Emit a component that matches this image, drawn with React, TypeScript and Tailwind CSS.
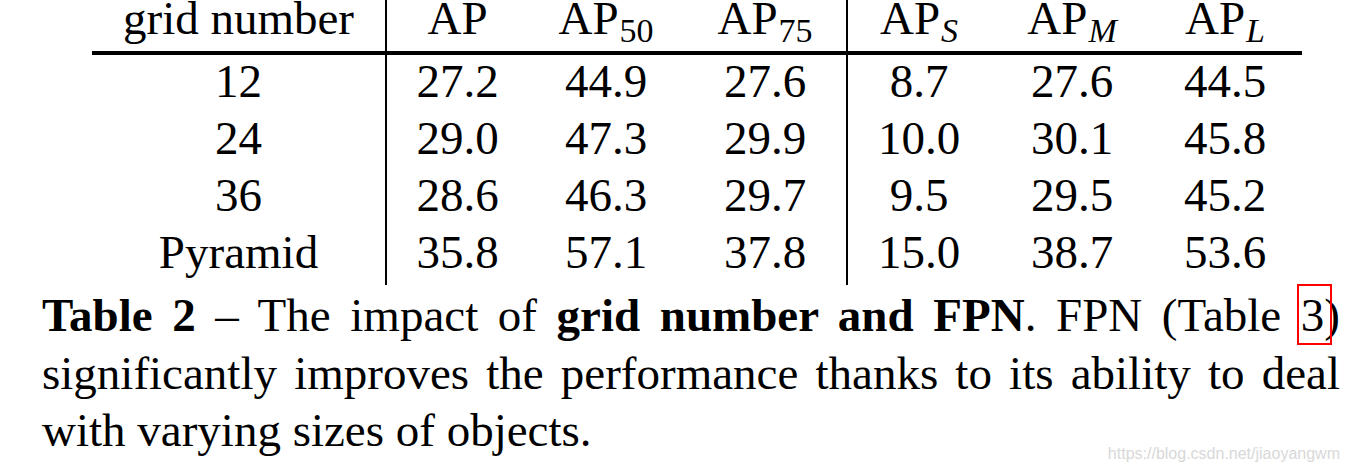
type Head = { base: string; sub?: string; italic?: boolean };

const heads: Head[] = [
  { base: "grid number" },
  { base: "AP" },
  { base: "AP", sub: "50" },
  { base: "AP", sub: "75" },
  { base: "AP", sub: "S", italic: true },
  { base: "AP", sub: "M", italic: true },
  { base: "AP", sub: "L", italic: true },
];

const rows = [
  ["12", "27.2", "44.9", "27.6", "8.7", "27.6", "44.5"],
  ["24", "29.0", "47.3", "29.9", "10.0", "30.1", "45.8"],
  ["36", "28.6", "46.3", "29.7", "9.5", "29.5", "45.2"],
  ["Pyramid", "35.8", "57.1", "37.8", "15.0", "38.7", "53.6"],
];

// vertical rules after the first column and after AP75
const colClass = [
  "border-r-2 border-black",
  "",
  "",
  "border-r-2 border-black",
  "",
  "",
  "pr-[6px]",
];

export default function App() {
  return (
    <div className="relative w-[1349px] h-[472px] overflow-hidden bg-white text-black font-['Liberation_Serif','Times_New_Roman',serif]">
      <div className="ml-[92px] w-[1210px] grid grid-cols-[295px_141px_156px_164px_142px_164px_148px] text-[47px]">
        {heads.map((h, i) => (
          <div
            key={"h" + i}
            className={`h-[55px] border-b-4 border-black leading-[36px] text-center whitespace-nowrap ${colClass[i]}`}
          >
            {h.base}
            {h.sub && (
              <span
                className={`ml-[1px] text-[34px] leading-none align-[-8px] ${h.italic ? "italic" : ""}`}
              >
                {h.sub}
              </span>
            )}
          </div>
        ))}
        {rows.map((r, ri) =>
          r.map((v, ci) => (
            <div
              key={ri + "-" + ci}
              className={`${ri === rows.length - 1 ? "h-[59px]" : "h-[57px]"} leading-[52px] text-center whitespace-nowrap ${colClass[ci]}`}
            >
              {v}
            </div>
          ))
        )}
      </div>

      <div className="mt-[2px] pl-[42px] w-[1340px] text-[47px] leading-[57.5px]">
        <div className="text-justify [text-align-last:justify]">
          <b>Table 2</b> – The impact of <b>grid number and FPN</b>. FPN (Table{" "}
          <span className="relative">
            3
            <span className="absolute -left-[4px] -top-[5px] w-[35px] h-[61px] border-2 border-[#ff0000]" />
          </span>
          )
        </div>
        <div className="text-justify [text-align-last:justify]">
          significantly improves the performance thanks to its ability to deal
        </div>
        <div>with varying sizes of objects.</div>
      </div>

      <div className="absolute right-[9px] bottom-[10px] font-['Liberation_Sans',Arial,sans-serif] text-[16px] leading-none text-[#d8d8d8]">
        https://blog.csdn.net/jiaoyangwm
      </div>
    </div>
  );
}
